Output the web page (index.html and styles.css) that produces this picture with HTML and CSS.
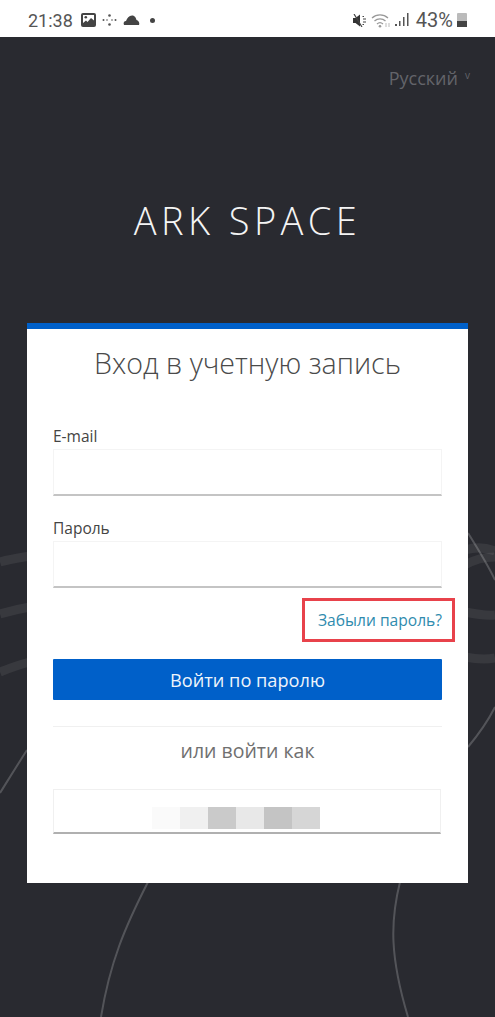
FILE: index.html
```html
<!DOCTYPE html>
<html lang="ru">
<head>
    <meta charset="UTF-8">
    <meta name="viewport" content="width=device-width, initial-scale=1.0">
    <title>ARK SPACE</title>
    <link rel="stylesheet" href="styles.css">
</head>
<body>
    <div class="status-bar">
        <div class="status-left">
            <span class="status-time">21:38</span>
            <svg width="15" height="14" viewBox="0 0 15 14"><path fill="#444" d="M2 0h11a2 2 0 0 1 2 2v10a2 2 0 0 1-2 2H2a2 2 0 0 1-2-2V2a2 2 0 0 1 2-2z"/><path fill="#fff" d="M2 2h11v5.500L10 5 6.500 9 5 7.500 2 10z"/><circle cx="4.800" cy="4.300" r="1.300" fill="#444"/></svg>
            <svg width="15" height="12" viewBox="0 0 15 12"><g fill="#555"><circle cx="7.500" cy="1.500" r="1.300"/><circle cx="7.500" cy="10.500" r="1.300"/><circle cx="1.500" cy="6" r="1"/><circle cx="5" cy="6" r=".8"/><circle cx="10" cy="6" r=".8"/><circle cx="13.500" cy="6" r="1"/></g></svg>
            <svg width="17" height="10" viewBox="0 0 17 10"><path fill="#444" d="M1 10C0 8 1 6 3 6 4 3 6 .5 9 .5 12 .5 13 3 13.500 5 15.500 5.500 17 8 16 10z"/></svg>
            <span class="status-dot"></span>
        </div>
        <div class="status-right">
            <svg class="icon-mute" width="14" height="13" viewBox="0 0 14 13"><path fill="#333" d="M0 4h2.500L7 .5v12L2.500 9H0z"/><path stroke="#444" stroke-width="1.200" fill="none" d="M1 0l8 13M9.500 2.500h1.500M10 5h3M10 8h3M9.500 10.500h1.500"/></svg>
            <svg class="icon-wifi" width="20" height="15" viewBox="0 0 20 15"><g fill="none" stroke="#999" stroke-width="1.300"><path d="M1 5a12 12 0 0 1 16 0"/><path d="M3.500 8a8 8 0 0 1 11 0"/><path d="M6 11a4.500 4.500 0 0 1 6 0"/></g><circle cx="9" cy="13.300" r="1.300" fill="#999"/><path stroke="#bbb" stroke-width="1" d="M15 10v4M18 10v4"/></svg>
            <svg class="icon-signal" width="15" height="14" viewBox="0 0 15 14"><g fill="#555"><rect x="0" y="11" width="2" height="2"/><rect x="4" y="8" width="1.500" height="5"/><rect x="8" y="4" width="1.500" height="9"/><rect x="12" y="0" width="1.500" height="13"/></g></svg>
            <span class="status-battery-text">43%</span>
            <div class="battery"><div class="battery-level"></div></div>
        </div>
    </div>

    <div class="page">
        <!-- background lines -->
        <svg class="page-lines" width="495" height="980" viewBox="0 0 495 980">
            <g fill="none" stroke="#fff" stroke-opacity=".07" stroke-width="9">
                <path d="M0 525C10 522 18 521 30 519"/>
                <path d="M0 577C10 574 18 572 30 570"/>
                <path d="M0 635C10 631 18 628 30 625"/>
                <path d="M465 513C475 510 485 510 495 514"/>
                <path d="M465 528C475 522 485 520 495 520"/>
                <path d="M465 575C475 577 485 579 495 578"/>
                <path d="M465 620C475 622 485 623 495 621"/>
            </g>
            <g fill="none" stroke="#fff" stroke-opacity=".2" stroke-width="2">
                <path d="M0 756C10 740 18 727 27 713"/>
                <path d="M468 496C478 512 488 528 495 543"/>
                <path d="M468 710C478 698 488 684 495 670"/>
                <path d="M148 845C125 890 110 925 101 980"/>
                <path d="M400 845C390 885 390 920 408 980"/>
            </g>
        </svg>

        <div class="lang-row">
            <span class="lang">Русский</span>
            <span class="lang-caret">v</span>
        </div>

        <div class="logo">ARK SPACE</div>

        <div class="card">
            <h1>Вход в учетную запись</h1>

            <label>E-mail</label>
            <div class="field"></div>

            <label>Пароль</label>
            <div class="field"></div>

            <div class="forgot-row">
                <a class="forgot" href="#">Забыли пароль?<span class="marker"></span></a>
            </div>

            <button class="login-btn">Войти по паролю</button>

            <div class="or-login">или войти как</div>

            <div class="account">
                <span class="blur blur-1"></span>
                <span class="blur blur-2"></span>
                <span class="blur blur-3"></span>
                <span class="blur blur-4"></span>
                <span class="blur blur-5"></span>
                <span class="blur blur-6"></span>
            </div>
        </div>
    </div>
</body>
</html>
```

FILE: styles.css
```css
* {
    box-sizing: border-box;
}

body {
    margin: 0;
    height: 1017px;
    overflow: hidden;
    font-family: 'Open Sans', sans-serif;
    background-color: #292a30;
}

.status-bar {
    height: 37px;
    background-color: white;
    display: flex;
    justify-content: space-between;
    align-items: center;
    padding: 3px 28px 0 28px;
    color: #555;
    font-family: Roboto, sans-serif;
}

.status-left,
.status-right {
    display: flex;
    align-items: center;
}

.status-left {
    gap: 6px;
}

.status-time {
    font-size: 18px;
    margin-right: 2px;
}

.status-battery-text {
    font-size: 20px;
    margin-left: 6px;
    margin-right: 4px;
}

.icon-wifi {
    margin-left: 4px;
}

.icon-signal {
    margin-left: 4px;
}

.status-dot {
    width: 5px;
    height: 5px;
    margin-left: 4px;
    border-radius: 50%;
    background-color: #444;
}

.battery {
    width: 10px;
    height: 14px;
    background-color: #bbb;
    border-radius: 1px;
    display: flex;
    align-items: flex-end;
}

.battery-level {
    width: 100%;
    height: 6px;
    background-color: #444;
}

.page {
    position: relative;
    height: 980px;
    padding: 0 27px;
}

.page-lines {
    position: absolute;
    top: 0;
    left: 0;
}

.lang-row {
    position: relative;
    height: 31px;
    padding-top: 29px;
    display: flex;
    justify-content: flex-end;
    align-items: flex-start;
    color: #63646a;
    font-size: 18px;
    line-height: 24px;
}

.lang-caret {
    margin-left: 7px;
    margin-right: -2px;
    font-size: 10px;
    line-height: 18px;
}

.logo {
    position: relative;
    margin-top: 131px;
    height: 42px;
    color: #f4f4f4;
    font-size: 38px;
    font-weight: 300;
    line-height: 42px;
    letter-spacing: 4.400px;
    text-align: center;
}

.card {
    position: relative;
    margin-top: 82px;
    height: 560px;
    padding: 0 26px;
    background-color: white;
    border-top: 6px solid #0060c9;
}

h1 {
    margin: 15px 0 0;
    color: #4a4a4a;
    font-size: 28.600px;
    font-weight: 300;
    line-height: 38px;
    text-align: center;
}

label {
    display: block;
    color: #444;
    font-size: 15.500px;
    line-height: 20px;
}

h1 + label {
    margin-top: 44px;
}

.field {
    height: 47px;
    margin-top: 3px;
    margin-bottom: 22px;
    border: 1px solid #f4f4f4;
    border-bottom: 2px solid #c4c4c4;
}

.forgot-row {
    display: flex;
    justify-content: flex-end;
}

.forgot {
    position: relative;
    color: #2f8bae;
    font-size: 15.600px;
    line-height: 20px;
    text-decoration: none;
}

.marker {
    position: absolute;
    top: -12px;
    left: -16px;
    width: 153px;
    height: 44px;
    border: 3px solid #e8424b;
}

.login-btn {
    display: block;
    width: 100%;
    height: 41px;
    margin-top: 29px;
    border: none;
    border-radius: 1px;
    background-color: #0060c9;
    color: #eef4fb;
    font-family: inherit;
    font-size: 18.200px;
}

.or-login {
    margin-top: 26px;
    padding-top: 11px;
    border-top: 1px solid #f0f0f0;
    color: #707070;
    font-size: 19.500px;
    line-height: 25px;
    text-align: center;
}

.account {
    width: 388px;
    height: 45px;
    margin-top: 26px;
    padding: 17px 0 4px 98px;
    display: flex;
    border: 1px solid #f0f0f0;
    border-bottom: 2px solid #b0b0b0;
}

.blur {
    width: 28px;
    height: 22px;
}

.blur-1 { background-color: #fafafa; }
.blur-2 { background-color: #f0f0f0; }
.blur-3 { background-color: #cacaca; }
.blur-4 { background-color: #e8e8e8; }
.blur-5 { background-color: #c4c4c4; }
.blur-6 { background-color: #d6d6d6; }
```
